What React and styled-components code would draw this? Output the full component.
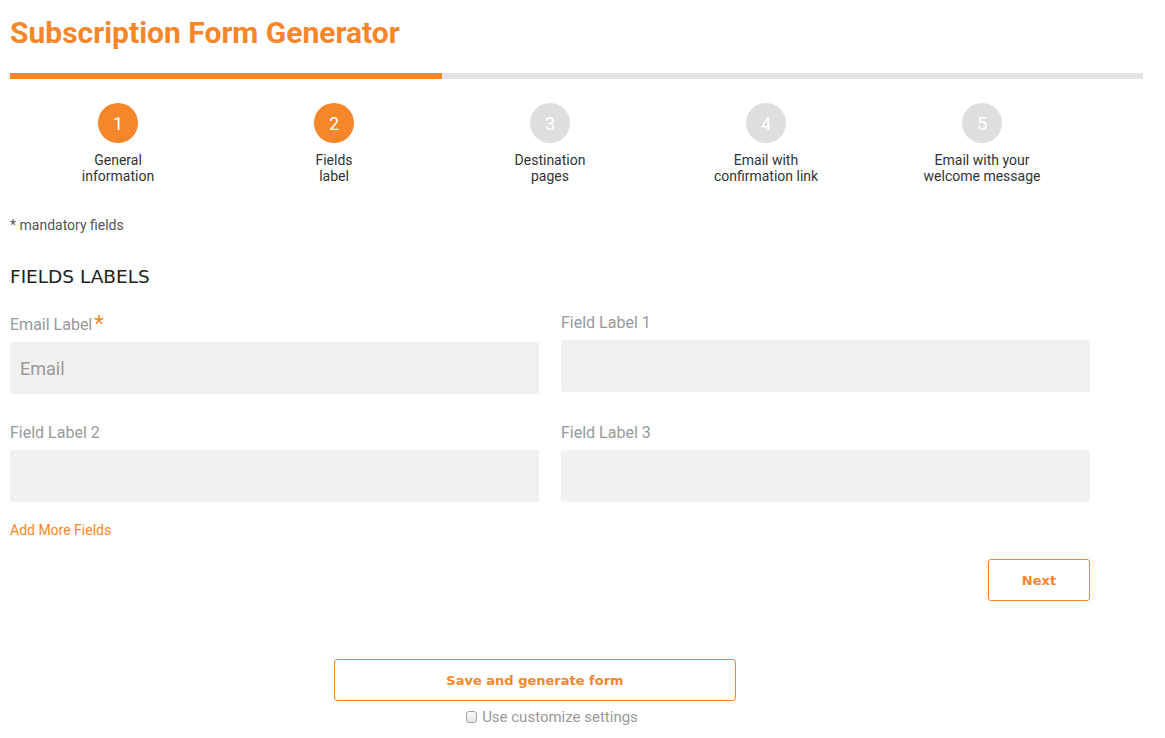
import styled, { createGlobalStyle } from "styled-components"

const ORANGE = "#f5862a"

const GlobalStyle = createGlobalStyle`
  body {
    margin: 0;
    padding: 10px;
    background: #fff;
    font-family: Roboto, "Liberation Sans", sans-serif;
  }
`

const Page = styled.div`
  width: 1133px;
`

const Title = styled.h1`
  margin: 0;
  padding-top: 5px;
  font-size: 30px;
  line-height: 36px;
  font-weight: 700;
  color: ${ORANGE};
`

const Progress = styled.div`
  margin-top: 22px;
  height: 6px;
  background: #e4e4e4;
`

const ProgressFill = styled.div`
  height: 100%;
  background: ${ORANGE};
`

const Steps = styled.ol`
  display: grid;
  grid-template-columns: repeat(5, 216px);
  list-style: none;
  margin: 24px 0 0;
  padding: 0;
`

const Step = styled.li`
  display: flex;
  flex-direction: column;
  align-items: center;
  text-align: center;
`

const StepDot = styled.span`
  display: flex;
  align-items: center;
  justify-content: center;
  width: 40px;
  height: 40px;
  border-radius: 50%;
  background: ${({ $done }) => ($done ? ORANGE : "#dedede")};
  color: #fff;
  font-size: 18px;
`

const StepLabel = styled.span`
  margin-top: 9px;
  font-size: 14px;
  line-height: 16px;
  color: #333;
`

const Mandatory = styled.p`
  margin: 32px 0 0;
  font-size: 14px;
  line-height: 18px;
  color: #555;
`

const SectionTitle = styled.h2`
  margin: 32px 0 0;
  font-family: "DejaVu Sans", Verdana, sans-serif;
  font-weight: 400;
  font-size: 18.5px;
  line-height: 22px;
  color: #222;
`

const FieldGrid = styled.div`
  display: grid;
  grid-template-columns: 529px 529px;
  align-items: start;
  column-gap: 22px;
  row-gap: 30px;
  margin-top: 26px;
`

const Field = styled.label`
  display: flex;
  flex-direction: column;
`

const FieldLabel = styled.span`
  box-sizing: border-box;
  display: flex;
  align-items: flex-end;
  height: ${({ $req }) => ($req ? "28px" : "26px")};
  padding-bottom: 9px;
  font-size: 16px;
  line-height: 16px;
  color: #999;
`

const Star = styled.span`
  align-self: flex-start;
  margin-left: 2px;
  color: ${ORANGE};
  font-size: 22px;
  line-height: 20px;
`

const Input = styled.input`
  box-sizing: border-box;
  height: 52px;
  border: none;
  border-radius: 3px;
  background: #f1f1f1;
  padding: 0 10px;
  font-family: Roboto, sans-serif;
  font-size: 18px;
  color: #555;
  &::placeholder {
    color: #999;
  }
  &:focus {
    outline: none;
  }
`

const AddLink = styled.a`
  display: inline-block;
  margin-top: 19px;
  font-size: 14px;
  line-height: 18px;
  color: ${ORANGE};
  text-decoration: none;
  cursor: pointer;
`

const NavRow = styled.div`
  display: flex;
  justify-content: flex-end;
  width: 1080px;
  margin-top: 20px;
`

const OutlineButton = styled.button`
  box-sizing: border-box;
  width: ${({ $wide }) => ($wide ? "402px" : "102px")};
  height: 42px;
  border: 1px solid ${ORANGE};
  border-radius: 3px;
  background: #fff;
  color: ${ORANGE};
  font-family: "DejaVu Sans", Verdana, sans-serif;
  font-weight: 700;
  font-size: 13px;
  cursor: pointer;
`

const Footer = styled.div`
  display: flex;
  flex-direction: column;
  align-items: center;
  width: 1080px;
  margin-top: 58px;
`

const SaveButton = styled(OutlineButton)`
  margin-right: 30px;
`

const CheckRow = styled.label`
  display: flex;
  align-items: center;
  gap: 5px;
  margin: 7px 0 0 4px;
  font-size: 15px;
  line-height: 18px;
  color: #999;
`

const Checkbox = styled.input`
  appearance: none;
  box-sizing: border-box;
  margin: 0;
  width: 11px;
  height: 12px;
  border: 1px solid #a3a3a3;
  border-radius: 3px;
  background: linear-gradient(#fdfdfd, #e4e4e4);
`

const steps = [
  ["General", "information"],
  ["Fields", "label"],
  ["Destination", "pages"],
  ["Email with", "confirmation link"],
  ["Email with your", "welcome message"],
]

const fields = [
  { label: "Email Label", required: true, placeholder: "Email" },
  { label: "Field Label 1" },
  { label: "Field Label 2" },
  { label: "Field Label 3" },
]

export default function App() {
  const current = 2
  return (
    <>
      <GlobalStyle />
      <Page>
        <Title>Subscription Form Generator</Title>
        <Progress>
          <ProgressFill style={{ width: `${(current / steps.length) * 95.4}%` }} />
        </Progress>

        <Steps>
          {steps.map(([a, b], i) => (
            <Step key={a + b}>
              <StepDot $done={i < current}>{i + 1}</StepDot>
              <StepLabel>
                {a}
                <br />
                {b}
              </StepLabel>
            </Step>
          ))}
        </Steps>

        <Mandatory>* mandatory fields</Mandatory>
        <SectionTitle>FIELDS LABELS</SectionTitle>

        <FieldGrid>
          {fields.map((f) => (
            <Field key={f.label}>
              <FieldLabel $req={f.required}>
                {f.label}
                {f.required && <Star>*</Star>}
              </FieldLabel>
              <Input placeholder={f.placeholder || ""} />
            </Field>
          ))}
        </FieldGrid>

        <AddLink>Add More Fields</AddLink>

        <NavRow>
          <OutlineButton>Next</OutlineButton>
        </NavRow>

        <Footer>
          <SaveButton $wide>Save and generate form</SaveButton>
          <CheckRow>
            <Checkbox type="checkbox" />
            Use customize settings
          </CheckRow>
        </Footer>
      </Page>
    </>
  )
}
